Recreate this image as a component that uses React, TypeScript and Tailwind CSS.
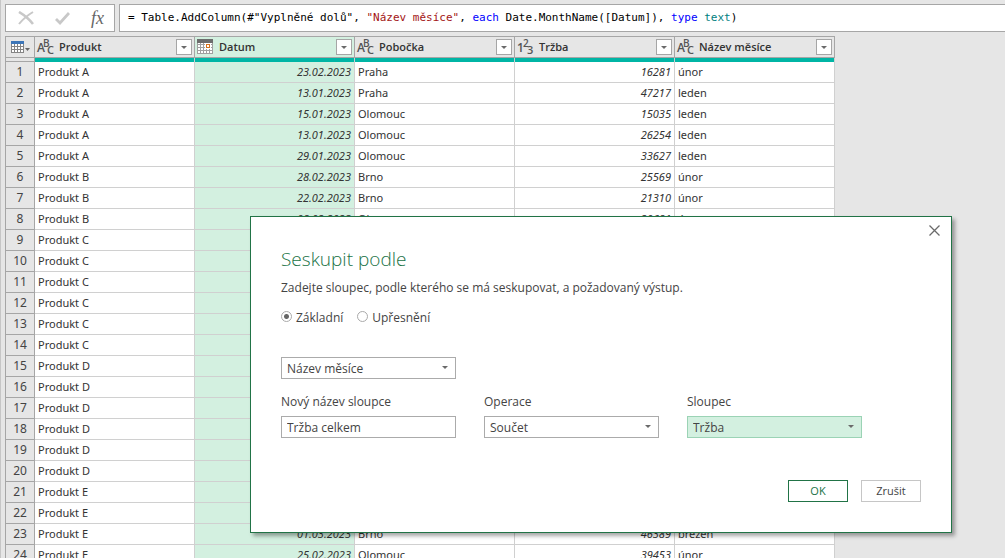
import { useState } from 'react';

type Kind = 'text' | 'date' | 'number';

const columns: { name: string; kind: Kind }[] = [
  { name: 'Produkt', kind: 'text' },
  { name: 'Datum', kind: 'date' },
  { name: 'Pobočka', kind: 'text' },
  { name: 'Tržba', kind: 'number' },
  { name: 'Název měsíce', kind: 'text' },
];

const rows = [
  ['Produkt A', '23.02.2023', 'Praha', '16281', 'únor'],
  ['Produkt A', '13.01.2023', 'Praha', '47217', 'leden'],
  ['Produkt A', '15.01.2023', 'Olomouc', '15035', 'leden'],
  ['Produkt A', '13.01.2023', 'Olomouc', '26254', 'leden'],
  ['Produkt A', '29.01.2023', 'Olomouc', '33627', 'leden'],
  ['Produkt B', '28.02.2023', 'Brno', '25569', 'únor'],
  ['Produkt B', '22.02.2023', 'Brno', '21310', 'únor'],
  ['Produkt B', '08.02.2023', 'Olomouc', '20681', 'únor'],
  ['Produkt C', '12.01.2023', 'Praha', '31842', 'leden'],
  ['Produkt C', '19.03.2023', 'Brno', '28450', 'březen'],
  ['Produkt C', '05.02.2023', 'Praha', '17963', 'únor'],
  ['Produkt C', '24.01.2023', 'Olomouc', '40218', 'leden'],
  ['Produkt C', '11.03.2023', 'Brno', '22764', 'březen'],
  ['Produkt C', '17.02.2023', 'Praha', '35190', 'únor'],
  ['Produkt D', '03.01.2023', 'Brno', '19477', 'leden'],
  ['Produkt D', '26.02.2023', 'Olomouc', '44031', 'únor'],
  ['Produkt D', '14.03.2023', 'Praha', '27385', 'březen'],
  ['Produkt D', '09.01.2023', 'Brno', '38612', 'leden'],
  ['Produkt D', '21.02.2023', 'Praha', '16908', 'únor'],
  ['Produkt D', '30.03.2023', 'Olomouc', '29546', 'březen'],
  ['Produkt E', '07.01.2023', 'Praha', '41273', 'leden'],
  ['Produkt E', '16.02.2023', 'Brno', '23859', 'únor'],
  ['Produkt E', '01.03.2023', 'Brno', '46389', 'březen'],
  ['Produkt E', '25.02.2023', 'Olomouc', '39453', 'únor'],
];

function TypeIcon({ kind }: { kind: Kind }) {
  if (kind === 'date') {
    return (
      <svg width="18" height="16" viewBox="0 0 18 16" className="shrink-0" shapeRendering="crispEdges">
        <path d="M0 4h16v11H0z" fill="#fff" />
        <path d="M0 4h1v11H0zM3 4h1v11H3zM6 4h1v11H6zM9 4h1v11H9zM12 4h1v11h-1zM15 4h1v11h-1zM0 5h16v1H0zM0 8h16v1H0zM0 11h16v1H0zM0 14h16v1H0z" fill="#a0a0a0" />
        <path d="M0 0h16v4H0z" fill="#6d6d6d" />
        <path d="M8 4h6v6H8z" fill="#fff" />
        <path d="M9 5h4v4H9zM10 6v2h2V6z" fill="#d8731c" fillRule="evenodd" />
      </svg>
    );
  }
  const [a, b, c] = kind === 'text' ? ['A', 'B', 'C'] : ['1', '2', '3'];
  return (
    <svg
      width="18"
      height="18"
      viewBox="0 0 18 18"
      className="shrink-0 overflow-visible font-['Open_Sans',sans-serif] font-semibold"
      fill="#555"
    >
      <text x="0" y="14" fontSize="12">{a}</text>
      <text x="6" y="9" fontSize="10">{b}</text>
      <text x="10" y="16" fontSize="11">{c}</text>
    </svg>
  );
}

function Caret({ className = '' }: { className?: string }) {
  return (
    <svg width="6" height="3" viewBox="0 0 6 3" className={className}>
      <path d="M0 0h6L3 3z" fill="#6a6a6a" />
    </svg>
  );
}

function FormulaBar() {
  return (
    <div className="flex gap-1 pt-1 pl-1">
      <div className="flex h-7 w-[110px] shrink-0 items-center justify-between border border-[#a6a6a6] bg-white pr-2.5 pl-3">
        <button aria-label="Zrušit vzorec">
          <svg width="16" height="14" viewBox="0 0 16 14" fill="none" stroke="#c8c8c8">
            <path d="M1 1c5 3 10 7 14 12" strokeWidth="2.6" />
            <path d="M15 1C10 4 5 8 1 13" strokeWidth="2" />
          </svg>
        </button>
        <button aria-label="Potvrdit vzorec">
          <svg width="15" height="13" viewBox="0 0 15 13" fill="none" stroke="#c8c8c8" strokeWidth="2.8">
            <path d="M1 7l4 4L14 1" />
          </svg>
        </button>
        <button aria-label="Vložit funkci" className="font-['Liberation_Serif',serif] text-lg leading-5 text-[#666] italic">
          fx
        </button>
      </div>
      <div className="flex h-7 min-w-0 grow items-center overflow-hidden border border-r-0 border-[#a6a6a6] bg-white pl-2 text-[11px] whitespace-pre text-black">
        <code className="font-['DejaVu_Sans_Mono',monospace]">
          = Table.AddColumn(#"Vyplněné dolů", <span className="text-[#a31515]">"Název měsíce"</span>,{' '}
          <span className="text-[#0000ff]">each</span> Date.MonthName([Datum]), <span className="text-[#0000ff]">type</span>{' '}
          <span className="text-[#008080]">text</span>)
        </code>
      </div>
    </div>
  );
}

function DataTable() {
  return (
    <table className="mt-1 ml-1 w-[830px] table-fixed border-separate border-spacing-0 text-[11px] leading-5">
      <colgroup>
        <col className="w-[30px]" />
        <col span={5} />
      </colgroup>
      <thead>
        <tr>
          <th className="h-[22px] border border-[#a6a6a6] p-0">
            <button aria-label="Možnosti tabulky" className="flex h-5 w-full items-center gap-px pl-[5px]">
              <svg width="13" height="12" viewBox="0 0 13 12" shapeRendering="crispEdges">
                <path d="M0 0h13v12H0z" fill="#fff" />
                <path d="M0 3h1v9H0zM3 3h1v9H3zM6 3h1v9H6zM9 3h1v9H9zM12 3h1v9h-1zM0 5h13v1H0zM0 8h13v1H0zM0 11h13v1H0z" fill="#858585" />
                <path d="M0 0h13v3H0z" fill="#3d76b8" />
              </svg>
              <svg width="5" height="3" viewBox="0 0 5 3" className="mt-1">
                <path d="M0 0h5L2.5 3z" fill="#666" />
              </svg>
            </button>
          </th>
          {columns.map((col) => (
            <th
              key={col.name}
              className={`border-y border-r border-[#a6a6a6] p-0 text-left font-['Open_Sans',sans-serif] font-semibold text-[#333] ${
                col.kind === 'date' ? 'bg-[#d3f0e0]' : ''
              }`}
            >
              <div className="flex h-5 items-center px-0.5">
                <TypeIcon kind={col.kind} />
                <span className="ml-1 grow">{col.name}</span>
                <button
                  aria-label={`Filtr ${col.name}`}
                  className="flex h-4 w-4 items-center justify-center border border-[#a6a6a6] bg-white"
                >
                  <Caret />
                </button>
              </div>
            </th>
          ))}
        </tr>
        <tr aria-hidden="true">
          <td className="h-1 border-x border-b border-[#a6a6a6] p-0" />
          {columns.map((col) => (
            <td key={col.name} className="h-1 border-r border-[#d0d0d0] bg-[#00b5a5] p-0" />
          ))}
        </tr>
      </thead>
      <tbody>
        {rows.map((row, i) => (
          <tr key={i}>
            <th className="h-[21px] border-x border-b border-[#a6a6a6] p-0 text-center text-xs leading-5 font-normal text-[#444]">{i + 1}</th>
            {row.map((value, j) => {
              const kind = columns[j].kind;
              return (
                <td
                  key={j}
                  className={`border-r border-b border-[#d0d0d0] px-[3px] py-0 text-[#333] ${kind === 'date' ? 'bg-[#d3f0e0]' : 'bg-white'} ${
                    kind === 'text' ? '' : 'text-right italic'
                  }`}
                >
                  {value}
                </td>
              );
            })}
          </tr>
        ))}
      </tbody>
    </table>
  );
}

type SelectProps = { id: string; options: string[]; label?: string; highlighted?: boolean };

function Select({ id, options, label, highlighted }: SelectProps) {
  return (
    <div className="relative w-[175px]">
      <select
        id={id}
        aria-label={label}
        className={`block h-[22px] w-full appearance-none border pt-px pl-[5px] text-[#444] ${
          highlighted ? 'border-[#9bd3b5] bg-[#d3f0e0]' : 'border-[#ababab] bg-white'
        }`}
      >
        {options.map((option) => (
          <option key={option}>{option}</option>
        ))}
      </select>
      <Caret className="pointer-events-none absolute top-[9px] right-2" />
    </div>
  );
}

function GroupByDialog() {
  const [mode, setMode] = useState('basic');

  return (
    <div
      role="dialog"
      aria-labelledby="dialog-title"
      className="absolute top-[216px] left-[249px] w-[702px] border border-[#217346] bg-white px-[30px] pt-7 pb-[30px] font-['Open_Sans',sans-serif] text-xs text-[#444] shadow-[3px_3px_4px_rgba(0,0,0,0.35)]"
    >
      <button aria-label="Zavřít" className="absolute top-2 right-[11px]">
        <svg width="11" height="11" viewBox="0 0 11 11" stroke="#6a6a6a" strokeWidth="1.3">
          <path d="M.5.5l10 10M10.5.5l-10 10" />
        </svg>
      </button>

      <h1 id="dialog-title" className="text-[19px] leading-7 font-light text-[#217346]">
        Seskupit podle
      </h1>
      <p className="mt-[5px] leading-5">Zadejte sloupec, podle kterého se má seskupovat, a požadovaný výstup.</p>

      <div className="mt-2.5 flex gap-3.5 leading-5">
        {[
          ['basic', 'Základní'],
          ['advanced', 'Upřesnění'],
        ].map(([value, label]) => (
          <label key={value} className="flex items-center gap-1">
            <input
              type="radio"
              name="mode"
              checked={mode === value}
              onChange={() => setMode(value)}
              className="mb-[3px] h-[11px] w-[11px] appearance-none rounded-full border border-[#aaa] bg-white checked:bg-[radial-gradient(#666_0_2px,#fff_3px)]"
            />
            {label}
          </label>
        ))}
      </div>

      <div className="mt-[29px]">
        <Select id="group-column" label="Sloupec pro seskupení" options={['Název měsíce', 'Produkt', 'Pobočka']} />
      </div>

      <div className="mt-[13px] flex gap-7">
        <div className="w-[175px]">
          <label htmlFor="new-name" className="mb-1 block leading-5">
            Nový název sloupce
          </label>
          <input id="new-name" defaultValue="Tržba celkem" className="block h-[22px] w-full border border-[#ababab] bg-white pt-px pl-[5px]" />
        </div>
        <div>
          <label htmlFor="operation" className="mb-1 block leading-5">
            Operace
          </label>
          <Select id="operation" options={['Součet', 'Průměr', 'Medián']} />
        </div>
        <div>
          <label htmlFor="column" className="mb-1 block leading-5">
            Sloupec
          </label>
          <Select id="column" options={['Tržba', 'Datum']} highlighted />
        </div>
      </div>

      <div className="mt-[42px] flex justify-end gap-[13px] text-[11px]">
        <button className="h-[22px] w-[60px] border border-[#217346] text-[#217346]">OK</button>
        <button className="h-[22px] w-[60px] border border-[#c6c6c6]">Zrušit</button>
      </div>
    </div>
  );
}

export default function App() {
  return (
    <div className="relative h-screen overflow-hidden border-l border-[#c6c6c6] bg-[#e6e6e6] font-['Noto_Sans','Open_Sans',sans-serif]">
      <FormulaBar />
      <DataTable />
      <GroupByDialog />
    </div>
  );
}
